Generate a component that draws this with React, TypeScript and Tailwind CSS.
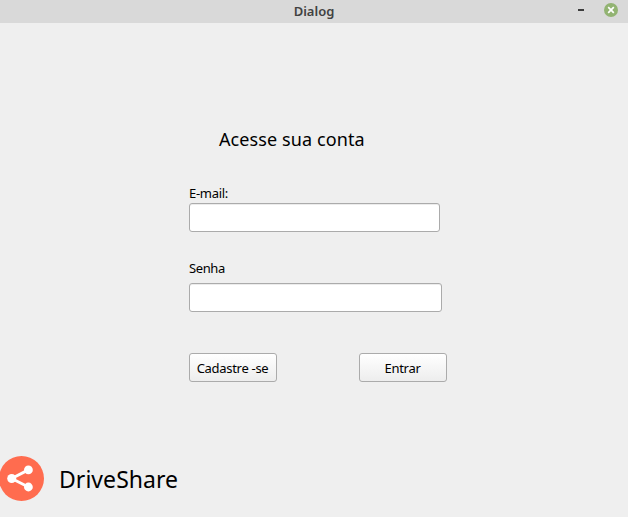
function TitleBar() {
  return (
    <header className="grid h-[23px] grid-cols-[1fr_auto_1fr] items-center bg-[#d9d9d9] text-[#414141]">
      <span />
      <h1 className="pb-px text-[13px] leading-[20px] font-semibold">Dialog</h1>
      <div className="flex items-center justify-end pr-[10px] pb-[3px]">
        <button type="button" aria-label="Minimizar" className="mr-5 h-[2px] w-[6px] bg-[#3c3c3c]" />
        <button type="button" aria-label="Fechar" className="size-[14px]">
          <svg viewBox="0 0 14 14" className="block size-[14px]">
            <circle cx="7" cy="7" r="7" fill="#92b372" />
            <path d="M4.2 4.2 9.8 9.8M9.8 4.2 4.2 9.8" stroke="#fff" strokeWidth="1.7" />
          </svg>
        </button>
      </div>
    </header>
  );
}

const fieldClass =
  "block h-[29px] rounded-[3px] border border-[#ababab] bg-white px-2 text-[13px] shadow-[inset_0_1px_0_#ececec] outline-none";
const buttonClass =
  "flex h-[29px] w-[88px] items-center justify-center rounded-[3px] border border-[#ababab] bg-linear-to-b from-white to-[#ededed] pt-[2px] pr-px text-[13px] tracking-[-0.3px] whitespace-nowrap";

function Logo() {
  return (
    <svg viewBox="0 0 45 45" className="-ml-px size-[45px] shrink-0">
      <circle cx="22.5" cy="22.5" r="22.5" fill="#ff6c4f" />
      <path d="M29.4 13.9 12.7 22.5 29.4 31" fill="none" stroke="#fff" strokeWidth="2.9" />
      <circle cx="12.7" cy="22.5" r="4.5" fill="#fff" />
      <circle cx="29.4" cy="13.9" r="4.4" fill="#fff" />
      <circle cx="29.4" cy="31" r="4.4" fill="#fff" />
    </svg>
  );
}

export default function App() {
  return (
    <div className="flex h-[517px] w-[628px] flex-col overflow-hidden bg-[#efefef] font-['Noto_Sans',sans-serif] text-black">
      <TitleBar />
      <main className="ml-[189px] flex w-[258px] flex-col pt-[102px]">
        <h2 className="ml-[30px] text-[18px] leading-[28px] tracking-[0.1px] whitespace-nowrap">Acesse sua conta</h2>
        <label htmlFor="email" className="mt-[31px] text-[13px] leading-[19px] tracking-[-0.3px]">E-mail:</label>
        <input id="email" type="email" className={`${fieldClass} w-[251px]`} />
        <label htmlFor="senha" className="mt-[27px] mb-[5px] text-[13px] leading-[19px] tracking-[-0.4px]">Senha</label>
        <input id="senha" type="password" className={`${fieldClass} w-[253px]`} />
        <div className="mt-[41px] flex justify-between">
          <button type="button" className={buttonClass}>Cadastre -se</button>
          <button type="button" className={buttonClass}>Entrar</button>
        </div>
      </main>
      <footer className="mt-auto mb-[16px] flex h-[45px] items-center">
        <Logo />
        <span className="ml-[15px] text-[23px] leading-[32px] tracking-[0.05px]">DriveShare</span>
      </footer>
    </div>
  );
}
